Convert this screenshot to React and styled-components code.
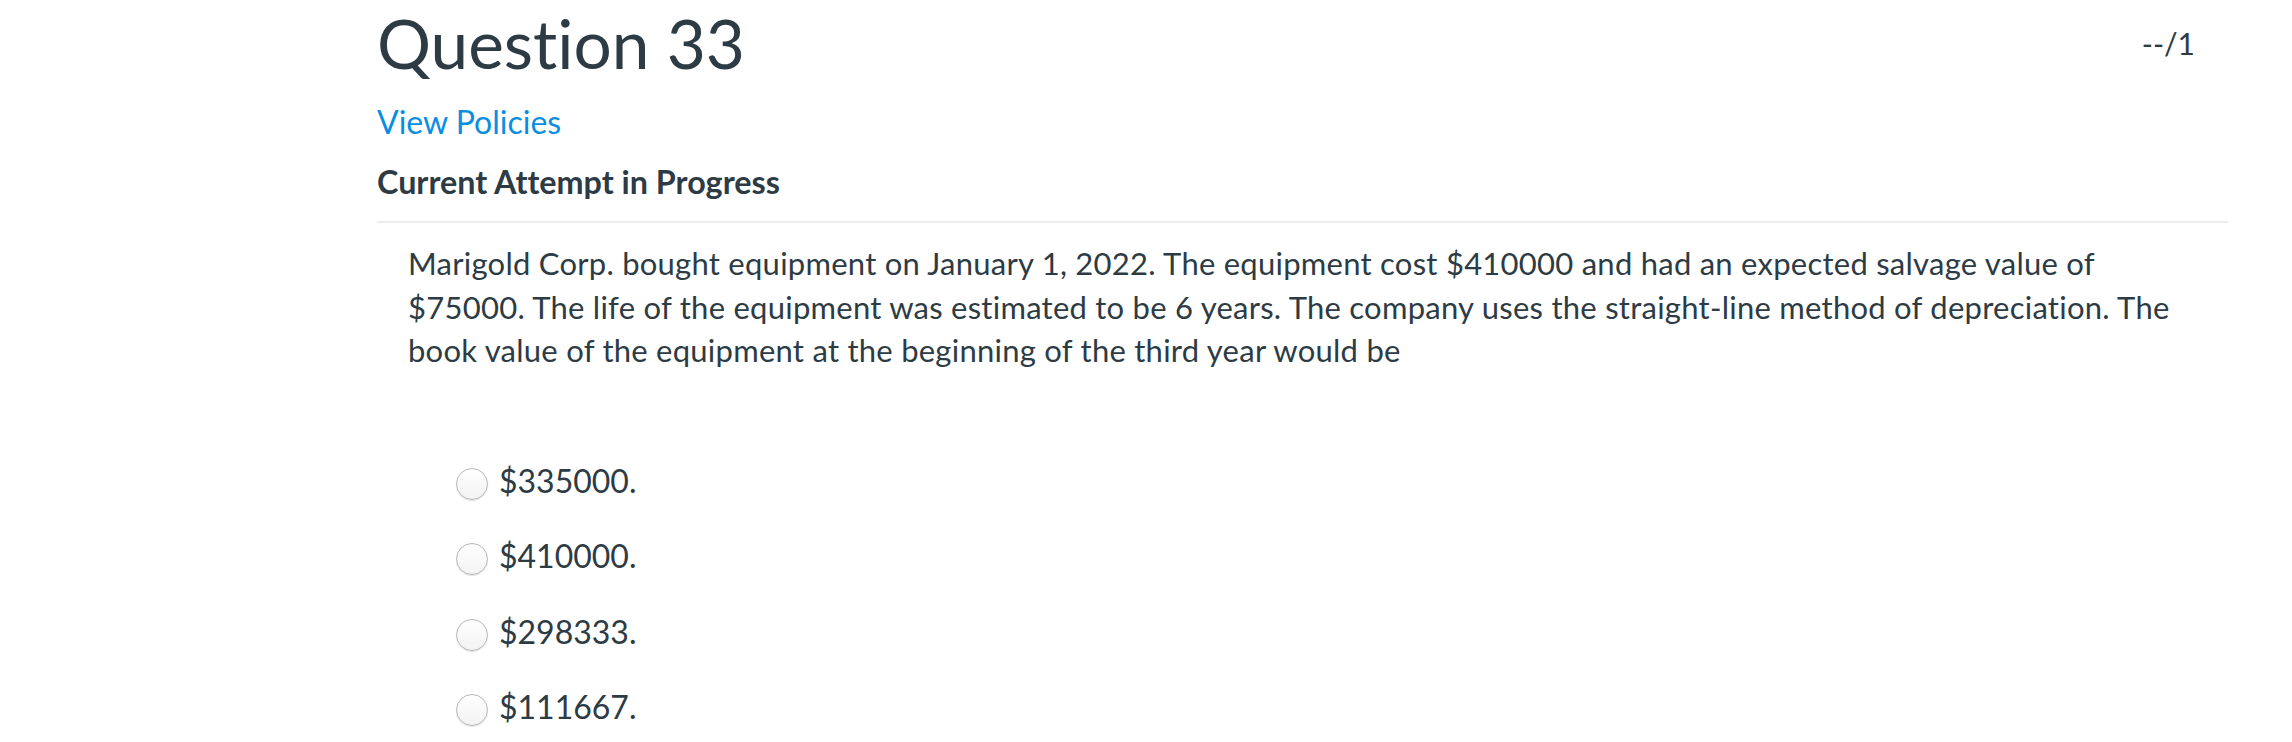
import React from "react";
import styled, { createGlobalStyle } from "styled-components";

const GlobalStyle = createGlobalStyle`
  html, body {
    margin: 0;
    padding: 0;
    background: #fff;
  }
  body {
    font-family: Lato, "Helvetica Neue", Arial, sans-serif;
    font-variant-ligatures: none;
    color: #2d3b45;
  }
`;

const answers = ["$335000.", "$410000.", "$298333.", "$111667."];

const App = () => {
  return (
    <>
      <GlobalStyle />
      <Page>
        <Header>
          <h2 className="title">Question 33</h2>
          <span className="points">--/1</span>
        </Header>
        <PolicyLink href="#">View Policies</PolicyLink>
        <Attempt>Current Attempt in Progress</Attempt>
        <Divider />
        <QuestionText>
          Marigold Corp. bought equipment on January 1, 2022. The equipment
          cost $410000 and had an expected salvage value of $75000. The life of
          the equipment was estimated to be 6 years. The company uses the
          straight-line method of depreciation. The book value of the equipment
          at the beginning of the third year would be
        </QuestionText>
        <Answers>
          {answers.map((a) => (
            <Option key={a}>
              <Radio type="radio" name="q33" />
              <span>{a}</span>
            </Option>
          ))}
        </Answers>
      </Page>
    </>
  );
};

export default App;

const Page = styled.div`
  width: 1851px;
  margin-left: 377px;
  display: flex;
  flex-direction: column;
  align-items: flex-start;
`;

const Header = styled.div`
  width: 100%;
  display: flex;
  justify-content: space-between;
  align-items: flex-start;

  .title {
    margin: 2px 0 0;
    font-size: 67.5px;
    font-weight: 400;
    line-height: 1.2;
  }
  .points {
    margin: 25px 33px 0 0;
    font-size: 30px;
    line-height: 1.2;
  }
`;

const PolicyLink = styled.a`
  margin-top: 20px;
  font-size: 32px;
  line-height: 1.2;
  color: #0b8ee2;
  text-decoration: none;
`;

const Attempt = styled.div`
  margin-top: 22px;
  font-size: 32.3px;
  font-weight: 700;
  line-height: 1.2;
`;

const Divider = styled.hr`
  width: 100%;
  margin: 19px 0 0;
  border: 0;
  height: 2px;
  background: #ececec;
`;

const QuestionText = styled.p`
  box-sizing: border-box;
  width: 1839px;
  margin: 19px 0 0;
  padding: 0 31px;
  font-size: 31px;
  line-height: 43.5px;
  letter-spacing: 0.25px;
`;

const Answers = styled.div`
  margin-top: 86px;
  padding-left: 79px;
  display: flex;
  flex-direction: column;
  gap: 32px;
`;

const Option = styled.label`
  display: flex;
  align-items: flex-start;
  gap: 11px;
  font-size: 32px;
  line-height: 43.5px;
`;

const Radio = styled.input`
  appearance: none;
  -webkit-appearance: none;
  margin: 9px 0 0;
  width: 32px;
  height: 32px;
  border-radius: 50%;
  border: 1.5px solid #b8b8b8;
  background: linear-gradient(#ffffff, #f3f3f3);
  box-shadow: 0 1px 1px rgba(0, 0, 0, 0.12);
  box-sizing: border-box;
`;
